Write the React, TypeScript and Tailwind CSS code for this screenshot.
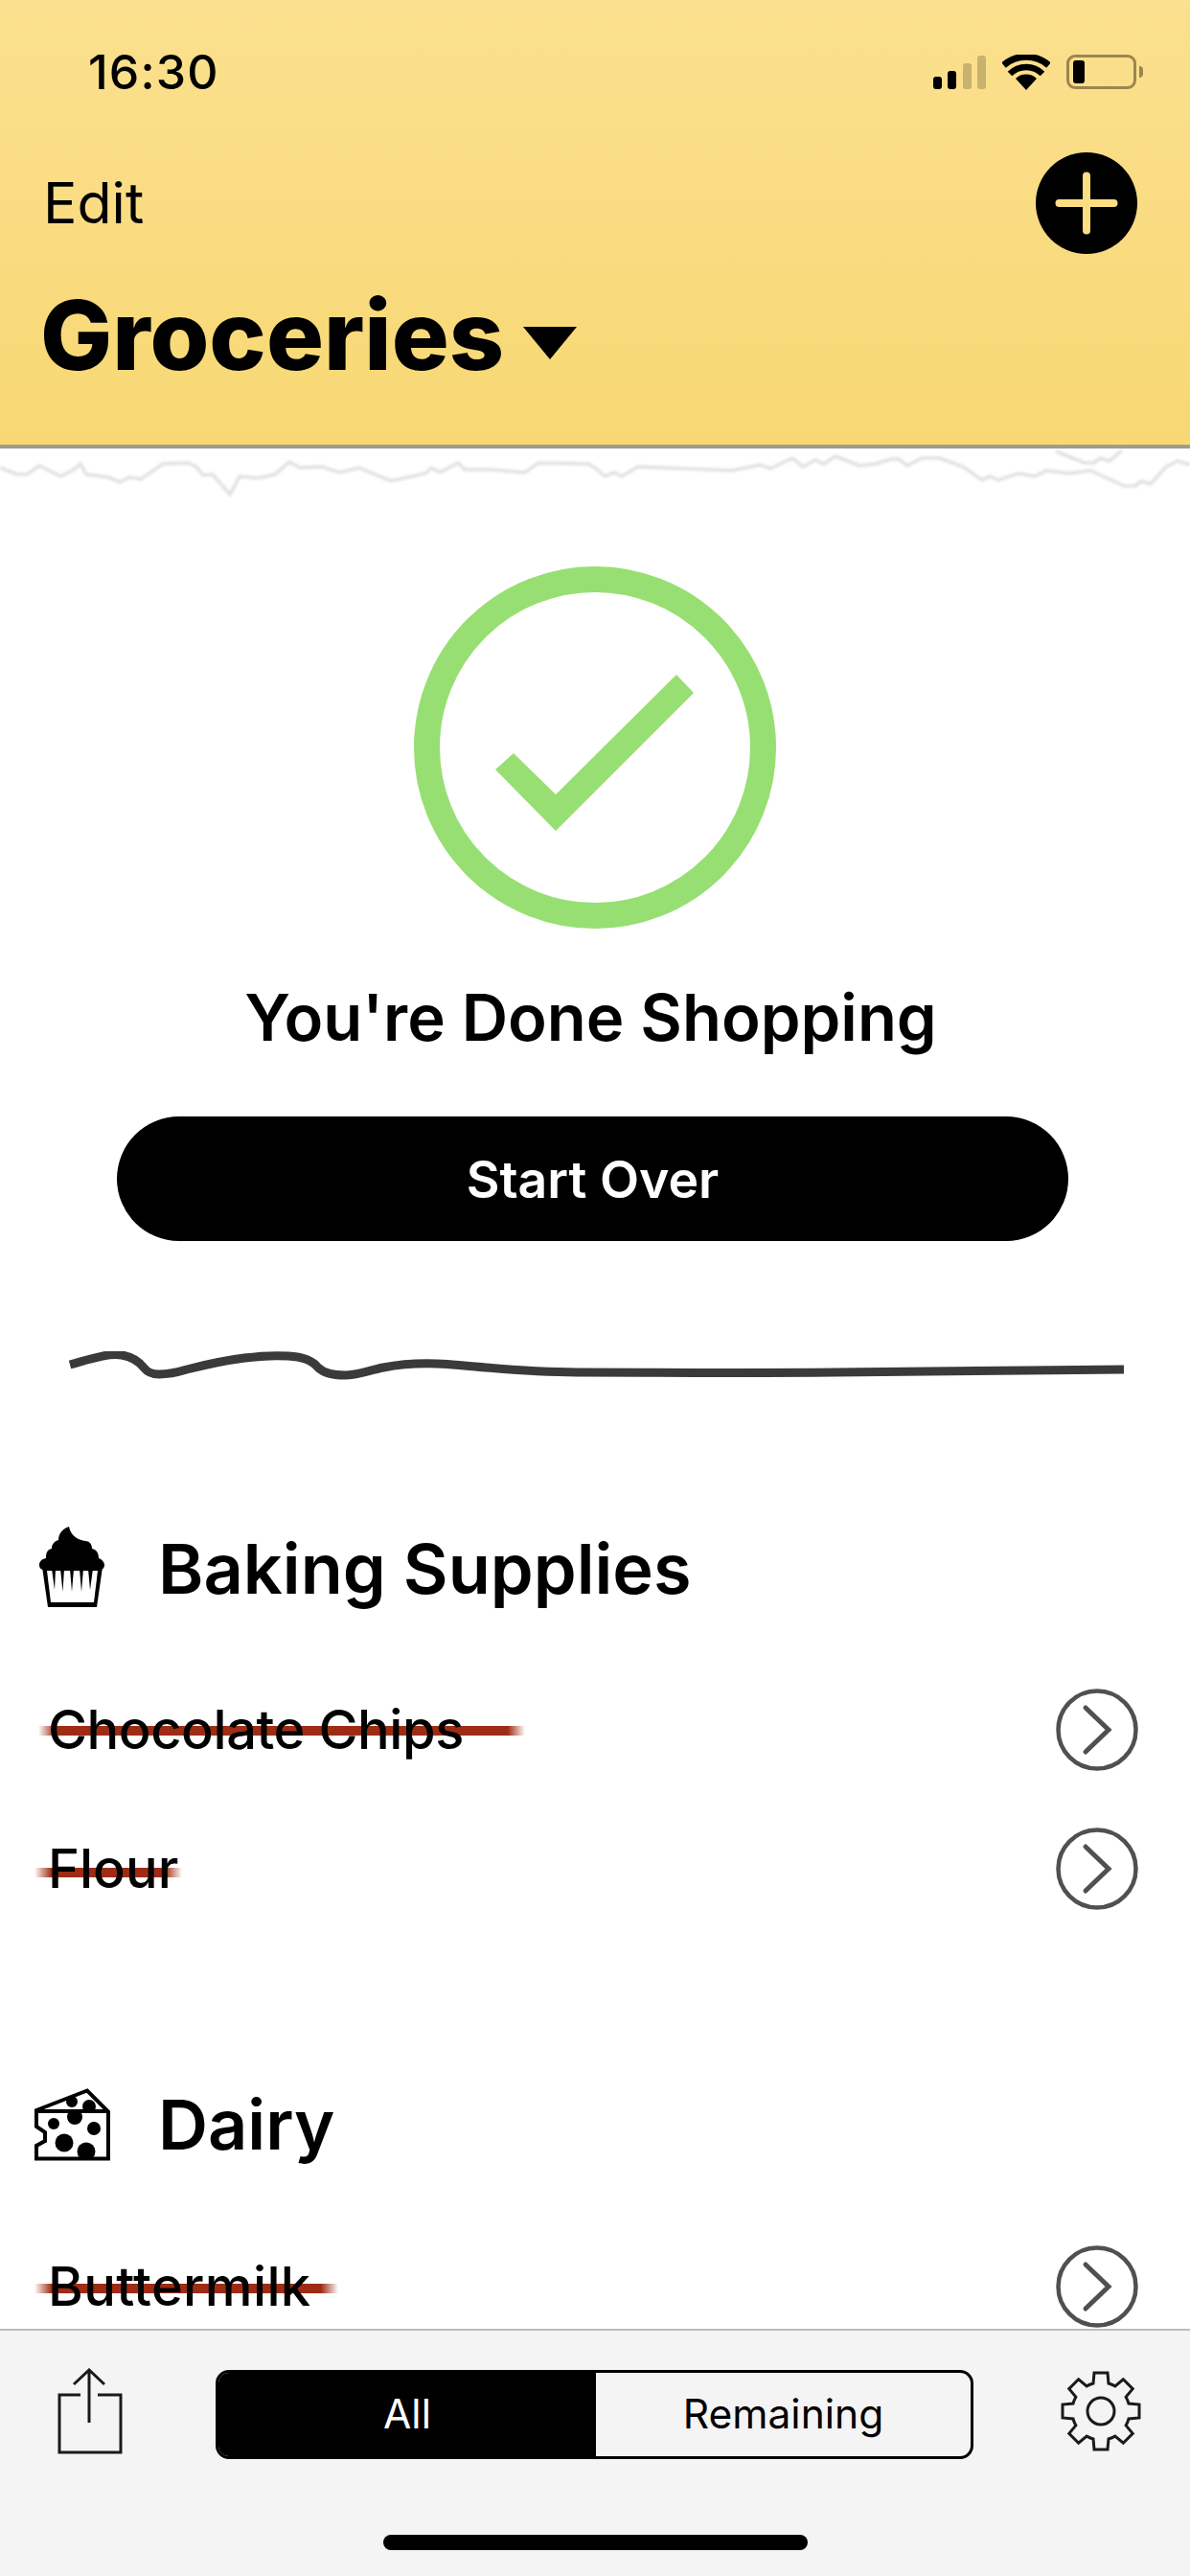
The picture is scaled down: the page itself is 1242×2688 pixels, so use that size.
const font = { fontFamily: 'Inter, "Liberation Sans", sans-serif' };

function gearPath() {
  const cx = 45, cy = 45, ro = 40, rb = 29, hw = 7;
  let d = '';
  for (let i = 0; i < 8; i++) {
    const a = (i * Math.PI) / 4 - Math.PI / 2;
    const ux = Math.cos(a), uy = Math.sin(a), vx = -uy, vy = ux;
    const p = (r: number, o: number) => `${(cx + ux * r + vx * o).toFixed(2)} ${(cy + uy * r + vy * o).toFixed(2)}`;
    d += i === 0 ? `M${p(rb, -hw - 1)}` : `A${rb} ${rb} 0 0 1 ${p(rb, -hw - 1)}`;
    d += `L${p(ro, -hw)}L${p(ro, hw)}L${p(rb, hw + 1)}`;
  }
  const a0 = -Math.PI / 2;
  const ux = Math.cos(a0), uy = Math.sin(a0), vx = -uy, vy = ux;
  d += `A${rb} ${rb} 0 0 1 ${(cx + ux * rb + vx * (-hw - 1)).toFixed(2)} ${(cy + uy * rb + vy * (-hw - 1)).toFixed(2)}Z`;
  return d;
}

function Cupcake() {
  return (
    <svg width="68" height="84" viewBox="0 0 68 84">
      <path d="M31 0C24 2 20 8 20 14C14 16 13 20 13 23C8 24 7 28 7 33C2 34 0 37 0 40C0 43 2 45 5 45L63 45C66 45 68 43 68 40C68 37 65 34 62 33C62 28 60 24 55 23C55 19 53 15 48 15C42 14 33 11 31 0Z" fill="#000" />
      <path d="M3 42L9 84H60L66 42Z" fill="#000" />
      <path d="M8 46L12 79H57L61 46Z" fill="#fff" />
      <path d="M13 44H17L16 66ZM22 44H26L24.500 68ZM32 44H36L34 68ZM42 44H46L44 68ZM51 44H56L53 66Z" fill="#000" />
    </svg>
  );
}

function Cheese() {
  return (
    <svg width="79" height="76" viewBox="0 0 79 76">
      <clipPath id="cheese-clip">
        <path d="M0 21L55 0L79 24V75H0V59L9 54V47L0 40Z" />
      </clipPath>
      <g clipPath="url(#cheese-clip)">
        <circle cx="39" cy="14" r="6" />
        <circle cx="57" cy="19" r="7" />
        <circle cx="42" cy="30" r="8" />
        <circle cx="20" cy="37" r="6" />
        <circle cx="62" cy="42" r="7" />
        <circle cx="31" cy="57" r="9.5" />
        <circle cx="54" cy="66" r="9.500" />
      </g>
      <path d="M2 23L55 2.500L77 24.500V73.500H2V60L11 55V46L2 40Z" fill="none" stroke="#000" strokeWidth="4" />
      <path d="M2 24H77" stroke="#000" strokeWidth="4" />
    </svg>
  );
}

function Chevron() {
  return (
    <svg width="90" height="90" viewBox="0 0 90 90" className="shrink-0">
      <circle cx="45" cy="45" r="40.500" fill="none" stroke="#505050" strokeWidth="4.500" />
      <path d="M33 22L57 45L33 68" fill="none" stroke="#505050" strokeWidth="5" strokeLinecap="round" strokeLinejoin="miter" />
    </svg>
  );
}

function Item({ name, textClass, lineClass }: { name: string; textClass: string; lineClass: string }) {
  return (
    <div className="flex h-[145px] items-center justify-between pl-[50px] pr-[52px]">
      <span className={`relative text-[56px] font-[450] leading-[70px] text-black ${textClass}`}>
        <span
          className={`absolute h-[10px] bg-[linear-gradient(90deg,#9e2c1400,#9e2c14_18px,#9e2c14_calc(100%-18px),#9e2c1400)] ${lineClass}`}
        />
        <span className="relative">{name}</span>
      </span>
      <Chevron />
    </div>
  );
}

export default function App() {
  return (
    <div className="flex h-[2688px] w-[1242px] flex-col overflow-hidden bg-white text-black" style={font}>
      <header className="flex h-[468px] shrink-0 flex-col border-b-[4px] border-[#a09b8d] bg-gradient-to-b from-[#fbe08f] to-[#f8d873]">
        <div className="mt-[50px] flex h-[50px] items-center justify-between pl-[92px] pr-[49px]">
          <span className="text-[50px] font-medium leading-[50px] tracking-[1.1px]">16:30</span>
          <div className="flex items-center">
            <div className="flex h-[36px] items-end gap-[6.500px]">
              <div className="h-[13px] w-[9px] rounded-[3px] bg-black" />
              <div className="h-[19px] w-[9px] rounded-[3px] bg-black" />
              <div className="h-[27px] w-[9px] rounded-[3px] bg-[#c9b26e]" />
              <div className="h-[35px] w-[9px] rounded-[3px] bg-[#c9b26e]" />
            </div>
            <svg width="50" height="37" viewBox="0 0 50 37" className="ml-[17px]">
              <path d="M25 37L14 25A16 16 0 0 1 36 25Z" fill="#000" />
              <path d="M8 20A24 24 0 0 1 42 20" fill="none" stroke="#000" strokeWidth="6.500" />
              <path d="M1.500 11A36 36 0 0 1 48.500 11" fill="none" stroke="#000" strokeWidth="7" />
            </svg>
            <div className="ml-[17px] flex h-[36px] w-[73px] items-center rounded-[9px] border-[3px] border-[#9c8650] pl-[4px]">
              <div className="h-[24px] w-[12px] rounded-[3px] bg-black" />
            </div>
            <div className="ml-[3px] h-[12px] w-[4px] rounded-r-[4px] bg-[#9c8650]" />
          </div>
        </div>
        <div className="mt-[59px] flex h-[106px] items-center justify-between pl-[45px] pr-[55px]">
          <span className="text-[59px] font-normal leading-[70px]">Edit</span>
          <svg width="106" height="106" viewBox="0 0 106 106">
            <circle cx="53" cy="53" r="53" fill="#000" />
            <path d="M53 24.500V81.500M24.500 53H81.500" stroke="#fbdd82" strokeWidth="8" strokeLinecap="round" />
          </svg>
        </div>
        <div className="mt-[25px] flex items-center pl-[42px]">
          <span className="text-[100px] font-extrabold leading-[120px]">Groceries</span>
          <svg width="56" height="34" viewBox="0 0 56 34" className="ml-[20px] mt-[16px]">
            <path d="M0 0H56L28 34Z" fill="#000" />
          </svg>
        </div>
      </header>

      <main className="min-h-0 flex-1 overflow-hidden">
        <svg width="1242" height="48" viewBox="0 468 1242 48" className="block overflow-visible">
          <defs>
            <filter id="torn-blur" x="-5%" y="-50%" width="110%" height="200%">
              <feGaussianBlur stdDeviation="1.500" />
            </filter>
          </defs>
          <g fill="none" stroke="#dcdcdc" strokeWidth="3" filter="url(#torn-blur)">
            <path d="M0 488L18 495L28 495L41 486L63 497L77 490L84 484L90 495L113 498L125 503L135 498L147 500L170 484L196 483L205 487L212 496L222 495L240 516L250 497L269 499L287 495L302 482L313 488L336 487L354 493L375 488L408 502L444 494L450 488L459 493L478 483L485 490L511 490L548 493L562 483L614 484L621 488L631 497L641 493L649 497L666 487L764 491L793 485L804 489L827 478L838 487L851 480L860 484L872 476L897 486L914 484L930 479L938 479L947 486L962 478L981 478L1005 487L1025 501L1033 497L1042 501L1063 494L1080 497L1092 491L1116 494L1138 491L1173 507L1185 507L1191 502L1201 505L1217 487L1229 481L1242 485" />
            <path d="M1102 471L1132 483L1142 483L1148 478L1158 481L1171 470" />
          </g>
        </svg>

        <section className="flex flex-col items-center">
          <svg width="378" height="378" viewBox="0 0 378 378" className="mt-[75px]">
            <circle cx="189" cy="189" r="175.500" fill="none" stroke="#97df73" strokeWidth="27" />
            <path d="M85 212L104 195L148 238L274 113L292 132L148 276Z" fill="#97df73" />
          </svg>
          <h1 className="mr-[9px] mt-[54px] text-[67px] font-semibold leading-[78px]">You're Done Shopping</h1>
          <button className="mt-[64px] flex h-[130px] w-[993px] items-center justify-center self-start ml-[122px] rounded-full bg-black pt-[2px] text-[53.500px] font-semibold text-white">
            Start Over
          </button>
        </section>

        <svg width="1242" height="30" viewBox="0 1410 1242 30" className="mt-[115px] block">
          <path
            d="M73 1424C95 1418 112 1412 127 1414C140 1416 146 1422 150 1427C154 1432 158 1434 166 1434C175 1434 185 1432 195 1429C230 1420 270 1413 301 1415C320 1416 328 1422 332 1427C338 1433 348 1435 360 1435C372 1435 385 1430 400 1427C425 1422 445 1422 467 1423.500C510 1427 550 1432 602 1432C690 1432 760 1433 872 1432C960 1431 1070 1430 1173 1429"
            fill="none"
            stroke="#3a3a3a"
            strokeWidth="9"
          />
        </svg>

        <div className="mt-[150px] flex h-[90px] items-center pl-[41px]">
          <Cupcake />
          <h2 className="ml-[56px] mt-[3px] text-[72px] font-semibold leading-[90px]">Baking Supplies</h2>
        </div>
        <div className="mt-[52px]">
          <Item name="Chocolate Chips" textClass="tracking-[-0.45px]" lineClass="left-[-10px] top-[31px] w-[508px]" />
          <Item name="Flour" textClass="tracking-normal" lineClass="left-[-14px] top-[34px] w-[154px]" />
        </div>

        <div className="mt-[150px] flex h-[90px] items-center pl-[36px]">
          <Cheese />
          <h2 className="ml-[50px] text-[72px] font-semibold leading-[90px]">Dairy</h2>
        </div>
        <div className="mt-[51px]">
          <Item name="Buttermilk" textClass="tracking-[0.35px]" lineClass="left-[-14px] top-[32px] w-[317px]" />
        </div>
      </main>

      <footer className="h-[258px] shrink-0 border-t-2 border-[#bdbdbd] bg-[#f4f4f4]">
        <div className="mt-[41px] flex h-[92px] items-center pl-[60px]">
          <svg width="68" height="90" viewBox="0 0 68 90" className="mt-[-7px]">
            <path d="M24 28H2V88H66V28H42" fill="none" stroke="#1a1a1a" strokeWidth="3" />
            <path d="M33 2V57M17 17L33 2L49 17" fill="none" stroke="#1a1a1a" strokeWidth="3" />
          </svg>
          <div className="ml-[97px] flex h-[93px] w-[791px] overflow-hidden rounded-[14px] border-[3px] border-black text-[42.500px]">
            <div className="flex w-[394px] items-center justify-center bg-black text-white">All</div>
            <div className="flex flex-1 items-center justify-center">Remaining</div>
          </div>
          <svg width="90" height="90" viewBox="0 0 90 90" className="ml-[88px] mt-[-6px]">
            <path d={gearPath()} fill="none" stroke="#1a1a1a" strokeWidth="3" />
            <circle cx="45" cy="45" r="14" fill="none" stroke="#1a1a1a" strokeWidth="3" />
          </svg>
        </div>
        <div className="mx-auto mt-[80px] h-[16px] w-[443px] rounded-full bg-black" />
      </footer>
    </div>
  );
}
